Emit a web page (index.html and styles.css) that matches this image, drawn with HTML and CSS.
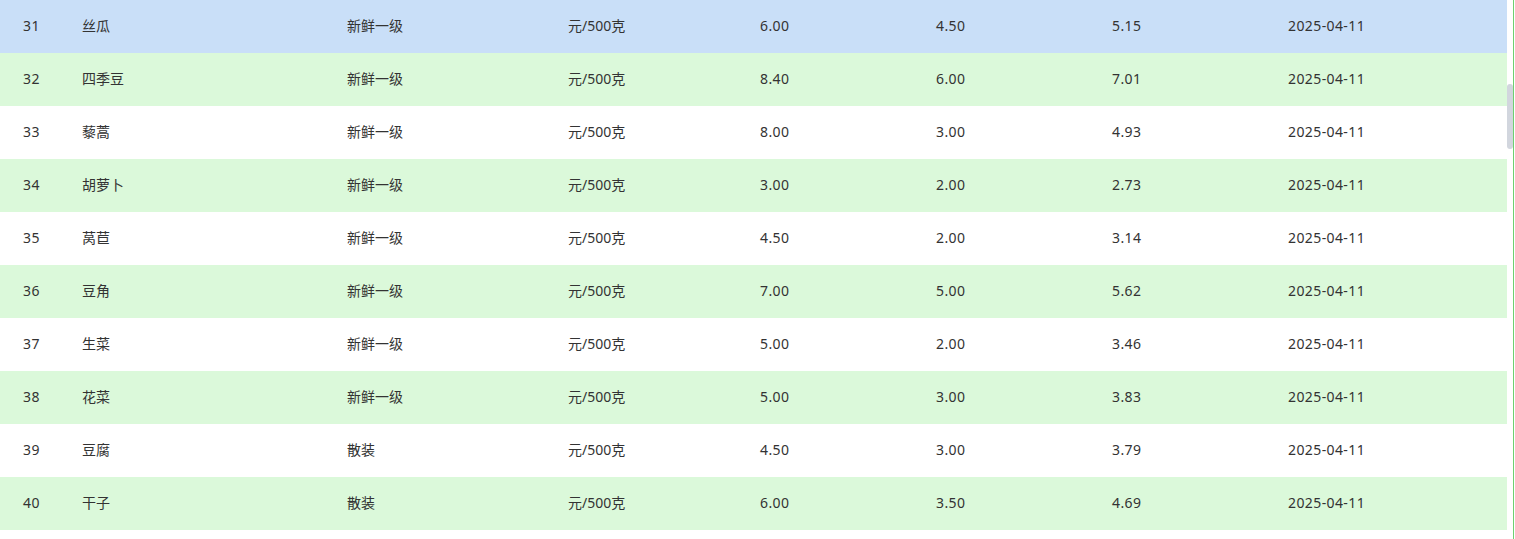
FILE: index.html
```html
<!DOCTYPE html>
<html lang="zh-CN">
<head>
<meta charset="utf-8">
<title>价格表</title>
<link rel="stylesheet" href="styles.css">
</head>
<body>
<div class="frame">
  <div class="table">
    <div class="row current"><span class="c-no">31</span><span class="c-name">丝瓜</span><span class="c-grade">新鲜一级</span><span class="c-unit">元/500克</span><span class="c-num">6.00</span><span class="c-num">4.50</span><span class="c-num">5.15</span><span class="c-date">2025-04-11</span></div>
    <div class="row alt"><span class="c-no">32</span><span class="c-name">四季豆</span><span class="c-grade">新鲜一级</span><span class="c-unit">元/500克</span><span class="c-num">8.40</span><span class="c-num">6.00</span><span class="c-num">7.01</span><span class="c-date">2025-04-11</span></div>
    <div class="row"><span class="c-no">33</span><span class="c-name">藜蒿</span><span class="c-grade">新鲜一级</span><span class="c-unit">元/500克</span><span class="c-num">8.00</span><span class="c-num">3.00</span><span class="c-num">4.93</span><span class="c-date">2025-04-11</span></div>
    <div class="row alt"><span class="c-no">34</span><span class="c-name">胡萝卜</span><span class="c-grade">新鲜一级</span><span class="c-unit">元/500克</span><span class="c-num">3.00</span><span class="c-num">2.00</span><span class="c-num">2.73</span><span class="c-date">2025-04-11</span></div>
    <div class="row"><span class="c-no">35</span><span class="c-name">莴苣</span><span class="c-grade">新鲜一级</span><span class="c-unit">元/500克</span><span class="c-num">4.50</span><span class="c-num">2.00</span><span class="c-num">3.14</span><span class="c-date">2025-04-11</span></div>
    <div class="row alt"><span class="c-no">36</span><span class="c-name">豆角</span><span class="c-grade">新鲜一级</span><span class="c-unit">元/500克</span><span class="c-num">7.00</span><span class="c-num">5.00</span><span class="c-num">5.62</span><span class="c-date">2025-04-11</span></div>
    <div class="row"><span class="c-no">37</span><span class="c-name">生菜</span><span class="c-grade">新鲜一级</span><span class="c-unit">元/500克</span><span class="c-num">5.00</span><span class="c-num">2.00</span><span class="c-num">3.46</span><span class="c-date">2025-04-11</span></div>
    <div class="row alt"><span class="c-no">38</span><span class="c-name">花菜</span><span class="c-grade">新鲜一级</span><span class="c-unit">元/500克</span><span class="c-num">5.00</span><span class="c-num">3.00</span><span class="c-num">3.83</span><span class="c-date">2025-04-11</span></div>
    <div class="row"><span class="c-no">39</span><span class="c-name">豆腐</span><span class="c-grade">散装</span><span class="c-unit">元/500克</span><span class="c-num">4.50</span><span class="c-num">3.00</span><span class="c-num">3.79</span><span class="c-date">2025-04-11</span></div>
    <div class="row alt"><span class="c-no">40</span><span class="c-name">干子</span><span class="c-grade">散装</span><span class="c-unit">元/500克</span><span class="c-num">6.00</span><span class="c-num">3.50</span><span class="c-num">4.69</span><span class="c-date">2025-04-11</span></div>
  </div>
  <div class="track"><div class="thumb"></div></div>
</div>
</body>
</html>
```
FILE: styles.css
```css
html, body {
  margin: 0;
  padding: 0;
  background: #ffffff;
}
body {
  font-family: "Noto Sans", "Noto Sans CJK SC", sans-serif;
  font-size: 14px;
  color: #333333;
  width: 1515px;
  height: 539px;
  overflow: hidden;
}
.frame {
  display: flex;
  width: 1513px;
  height: 539px;
  border-right: 1px solid #6fcf6f;
}
.table {
  width: 1507px;
  display: flex;
  flex-direction: column;
}
.row {
  display: grid;
  grid-template-columns: 59px 265px 221px 192px 176px 176px 176px 1fr;
  align-items: center;
  box-sizing: border-box;
  height: 53px;
  padding-left: 23px;
  padding-bottom: 2px;
  background: #ffffff;
  line-height: 20px;
}
.row.alt {
  background: #dbf9da;
}
.row.current {
  background: #c9dff8;
}
.row span {
  white-space: nowrap;
}
.row .c-no,
.row .c-num,
.row .c-date {
  letter-spacing: 0.4px;
}
.track {
  width: 6px;
  flex: none;
}
.thumb {
  margin-top: 84px;
  height: 65px;
  width: 6px;
  border-radius: 3px;
  background: #d2d6de;
}
```
